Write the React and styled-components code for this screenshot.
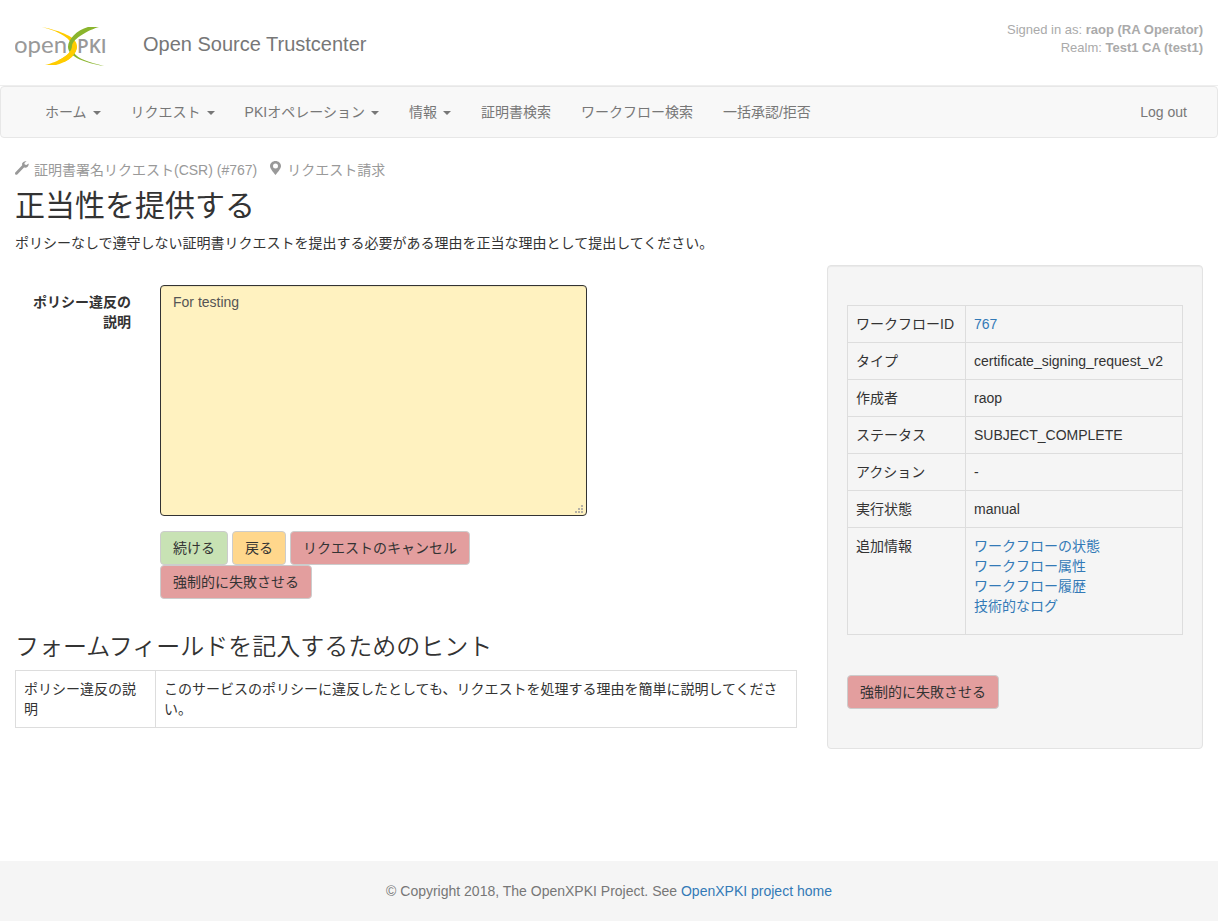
import React, { useState } from 'react';
import styled, { createGlobalStyle } from 'styled-components';

const GlobalStyle = createGlobalStyle`
    * {
        box-sizing: border-box;
    }
    body {
        margin: 0;
        background: #fff;
        color: #333;
        font-family: 'Liberation Sans', Arial, 'Noto Sans CJK JP', sans-serif;
        font-size: 14px;
        line-height: 20px;
    }
    a {
        color: #337ab7;
        text-decoration: none;
        &:hover {
            text-decoration: underline;
        }
    }
`

const Page = styled.div`
    display: flex;
    flex-direction: column;
    min-height: 100vh;
`

const Header = styled.header`
    display: flex;
    align-items: flex-start;
    height: 86px;
    padding: 20px 15px 0;
    border-bottom: 1px solid #eee;
`

const LogoLink = styled.a`
    display: block;
    width: 92px;
    height: 48px;
    svg {
        display: block;
    }
`

const SiteName = styled.div`
    flex: 1;
    padding: 14px 0 0 36px;
    font-size: 20px;
    color: #777;
`

const Session = styled.div`
    padding-top: 1px;
    font-size: 13px;
    line-height: 18px;
    text-align: right;
    color: #aaa;
`

const Navbar = styled.nav`
    display: flex;
    justify-content: space-between;
    margin-bottom: 22px;
    padding: 0 15px;
    background: #f8f8f8;
    border: 1px solid #e7e7e7;
    border-radius: 4px;
`

const NavList = styled.ul`
    display: flex;
    margin: 0;
    padding: 0 0 0 ${({ $indent }) => ($indent ? '14px' : '0')};
    list-style: none;
`

const NavLink = styled.a`
    display: flex;
    align-items: center;
    gap: 6px;
    padding: 15px;
    color: #777;
    white-space: nowrap;
`

const Caret = styled.span`
    margin-top: 2px;
    border-top: 4px solid;
    border-right: 4px solid transparent;
    border-left: 4px solid transparent;
`

const Columns = styled.main`
    display: grid;
    grid-template-columns: minmax(0, 2fr) minmax(0, 1fr);
    margin-bottom: 30px;
`

const Intro = styled.div`
    padding: 0 15px;
`

const Breadcrumb = styled.div`
    display: flex;
    gap: 12px;
    color: #999;
`

const Crumb = styled.span`
    display: flex;
    gap: 5px;
    svg {
        margin-top: 1px;
        fill: currentColor;
    }
`

const Title = styled.h2`
    margin: 9px 0 11px;
    font-size: 30px;
    line-height: 33px;
    font-weight: 400;
`

const Lead = styled.p`
    margin: 0 0 12px;
`

const Content = styled.div`
    padding: 20px 15px 0;
`

const Form = styled.form`
    display: grid;
    grid-template-columns: 116px minmax(0, 427px);
    gap: 15px 29px;
`

const Label = styled.label`
    padding: 7px 0 0 15px;
    font-weight: 700;
    text-align: right;
`

const TextArea = styled.textarea`
    display: block;
    width: 100%;
    height: 231px;
    padding: 6px 12px;
    background: #fff2c0;
    border: 1px solid #333;
    border-radius: 4px;
    box-shadow: inset 0 1px 1px rgba(0, 0, 0, .075);
    color: #555;
    font: inherit;
    resize: vertical;
    outline: none;
    &::-webkit-resizer {
        background: url("data:image/svg+xml,%3Csvg xmlns='http://www.w3.org/2000/svg' width='8' height='8' fill='%23b5b1a5'%3E%3Cpath d='M6 0h2v2H6zM3 3h2v2H3zM6 3h2v2H6zM0 6h2v2H0zM3 6h2v2H3zM6 6h2v2H6z'/%3E%3C/svg%3E") no-repeat right 3px bottom 2px;
    }
`

const Buttons = styled.div`
    grid-column: 2;
    display: flex;
    flex-wrap: wrap;
    gap: 0 4px;
`

const colors = {
    go: '#c8e2b4',
    back: '#ffd78c',
    fail: '#e39e9e',
}

const Button = styled.button`
    padding: 6px 12px;
    background: ${({ $kind }) => colors[$kind]};
    border: 1px solid #ccc;
    border-radius: 4px;
    color: #333;
    font: inherit;
    cursor: pointer;
`

const SubTitle = styled.h3`
    margin: 35px 0 10px;
    font-size: 24px;
    line-height: 26px;
    font-weight: 350;
`

const Table = styled.table`
    width: 100%;
    border-collapse: collapse;
    th, td {
        padding: 8px;
        border: 1px solid #ddd;
        font-weight: 400;
        text-align: left;
        vertical-align: top;
    }
    th {
        width: ${({ $head }) => $head};
    }
`

const Well = styled.aside`
    margin: 0 15px;
    padding: 39px 19px;
    background: #f5f5f5;
    border: 1px solid #e3e3e3;
    border-radius: 4px;
    box-shadow: inset 0 1px 1px rgba(0, 0, 0, .05);
    ${Table} {
        margin-bottom: 40px;
    }
`

const LinkList = styled.ul`
    margin: 0 0 10px;
    padding: 0;
    list-style: none;
`

const Footer = styled.footer`
    margin-top: auto;
    padding: 20px 15px;
    background: #f5f5f5;
    color: #777;
    text-align: center;
`

const Logo = () => (
    <svg width="92" height="48" viewBox="0 0 92 48" role="img" aria-label="OpenXPKI">
        <g fill="#999" fontFamily="Lato, 'Open Sans', sans-serif">
            <text x="-1" y="33" fontSize="24" fontWeight="400">open</text>
            <text x="62" y="33" fontSize="19" fontWeight="600" fontFamily="'Open Sans', 'Noto Sans', sans-serif">PKI</text>
        </g>
        <path d="M27 7C46 11 62 17 62 26C62 36 50 43 41 45H30C43 42 57 34 57 27C57 19 46 12 27 7Z" fill="#fc0" />
        <path d="M73 7H84C74 10 58 18 57 26C57 29 58 31 59 33C63 39 74 42 89 46C71 43 53 37 53 27C53 19 62 10 73 7Z" fill="#8ab52d" />
        <path d="M57 26H62C62 33 56 39 49 42L44 40C52 36 57 31 57 26Z" fill="#fc0" />
    </svg>
)

const Wrench = () => (
    <svg width="14" height="14" viewBox="0 0 14 14" aria-hidden="true">
        <path d="M13.6 2.4L11.4 4.1L9.7 3.6L9.4 2.1L11.6.3C9.7-.3 7.6.8 7.1 2.6C7 3.2 7.1 3.7 7.2 4.2L.5 11.3C-.2 12-.1 12.8.4 13.4C1 14 1.9 14 2.5 13.3L9 6.5C11.8 7.3 14.2 5.1 13.6 2.4Z" />
    </svg>
)

const Marker = () => (
    <svg width="13" height="14" viewBox="0 0 13 14" aria-hidden="true">
        <path fillRule="evenodd" d="M6.5 0C3.4 0 1 2.2 1 5C1 7.8 4.4 11.2 6.5 14C8.6 11.2 12 7.8 12 5C12 2.2 9.6 0 6.5 0ZM6.5 2.4A2.5 2.5 0 1 1 6.5 7.4A2.5 2.5 0 0 1 6.5 2.4Z" />
    </svg>
)

const menu = [
    { label: 'ホーム', sub: true },
    { label: 'リクエスト', sub: true },
    { label: 'PKIオペレーション', sub: true },
    { label: '情報', sub: true },
    { label: '証明書検索' },
    { label: 'ワークフロー検索' },
    { label: '一括承認/拒否' },
]

const workflow = [
    ['ワークフローID', <a href="#workflow">767</a>],
    ['タイプ', 'certificate_signing_request_v2'],
    ['作成者', 'raop'],
    ['ステータス', 'SUBJECT_COMPLETE'],
    ['アクション', '-'],
    ['実行状態', 'manual'],
]

const links = ['ワークフローの状態', 'ワークフロー属性', 'ワークフロー履歴', '技術的なログ']

const App = () => {
    const [reason, setReason] = useState('For testing');

    return (
        <Page lang="ja">
            <GlobalStyle />
            <Header>
                <LogoLink href="#home"><Logo /></LogoLink>
                <SiteName>Open Source Trustcenter</SiteName>
                <Session>
                    <div>Signed in as: <b>raop (RA Operator)</b></div>
                    <div>Realm: <b>Test1 CA (test1)</b></div>
                </Session>
            </Header>
            <Navbar>
                <NavList $indent>
                    {menu.map((item) => (
                        <li key={item.label}>
                            <NavLink href="#menu">{item.label}{item.sub && <Caret />}</NavLink>
                        </li>
                    ))}
                </NavList>
                <NavList>
                    <li><NavLink href="#logout">Log out</NavLink></li>
                </NavList>
            </Navbar>
            <Intro>
                <Breadcrumb>
                    <Crumb><Wrench />証明書署名リクエスト(CSR) (#767)</Crumb>
                    <Crumb><Marker />リクエスト請求</Crumb>
                </Breadcrumb>
                <Title>正当性を提供する</Title>
                <Lead>ポリシーなしで遵守しない証明書リクエストを提出する必要がある理由を正当な理由として提出してください。</Lead>
            </Intro>
            <Columns>
                <Content>
                    <Form onSubmit={(e) => e.preventDefault()}>
                        <Label htmlFor="reason">ポリシー違反の説明</Label>
                        <TextArea id="reason" value={reason} onChange={(e) => setReason(e.target.value)} />
                        <Buttons>
                            <Button type="submit" $kind="go">続ける</Button>
                            <Button type="button" $kind="back">戻る</Button>
                            <Button type="button" $kind="fail">リクエストのキャンセル</Button>
                            <Button type="button" $kind="fail">強制的に失敗させる</Button>
                        </Buttons>
                    </Form>
                    <SubTitle>フォームフィールドを記入するためのヒント</SubTitle>
                    <Table $head="140px">
                        <tbody>
                            <tr>
                                <th scope="row">ポリシー違反の説明</th>
                                <td>このサービスのポリシーに違反したとしても、リクエストを処理する理由を簡単に説明してください。</td>
                            </tr>
                        </tbody>
                    </Table>
                </Content>
                <Well>
                    <Table $head="118px">
                        <tbody>
                            {workflow.map(([name, value]) => (
                                <tr key={name}>
                                    <th scope="row">{name}</th>
                                    <td>{value}</td>
                                </tr>
                            ))}
                            <tr>
                                <th scope="row">追加情報</th>
                                <td>
                                    <LinkList>
                                        {links.map((link) => <li key={link}><a href="#info">{link}</a></li>)}
                                    </LinkList>
                                </td>
                            </tr>
                        </tbody>
                    </Table>
                    <Button type="button" $kind="fail">強制的に失敗させる</Button>
                </Well>
            </Columns>
            <Footer>
                © Copyright 2018, The OpenXPKI Project. See <a href="#project">OpenXPKI project home</a>
            </Footer>
        </Page>
    )
}

export default App;
